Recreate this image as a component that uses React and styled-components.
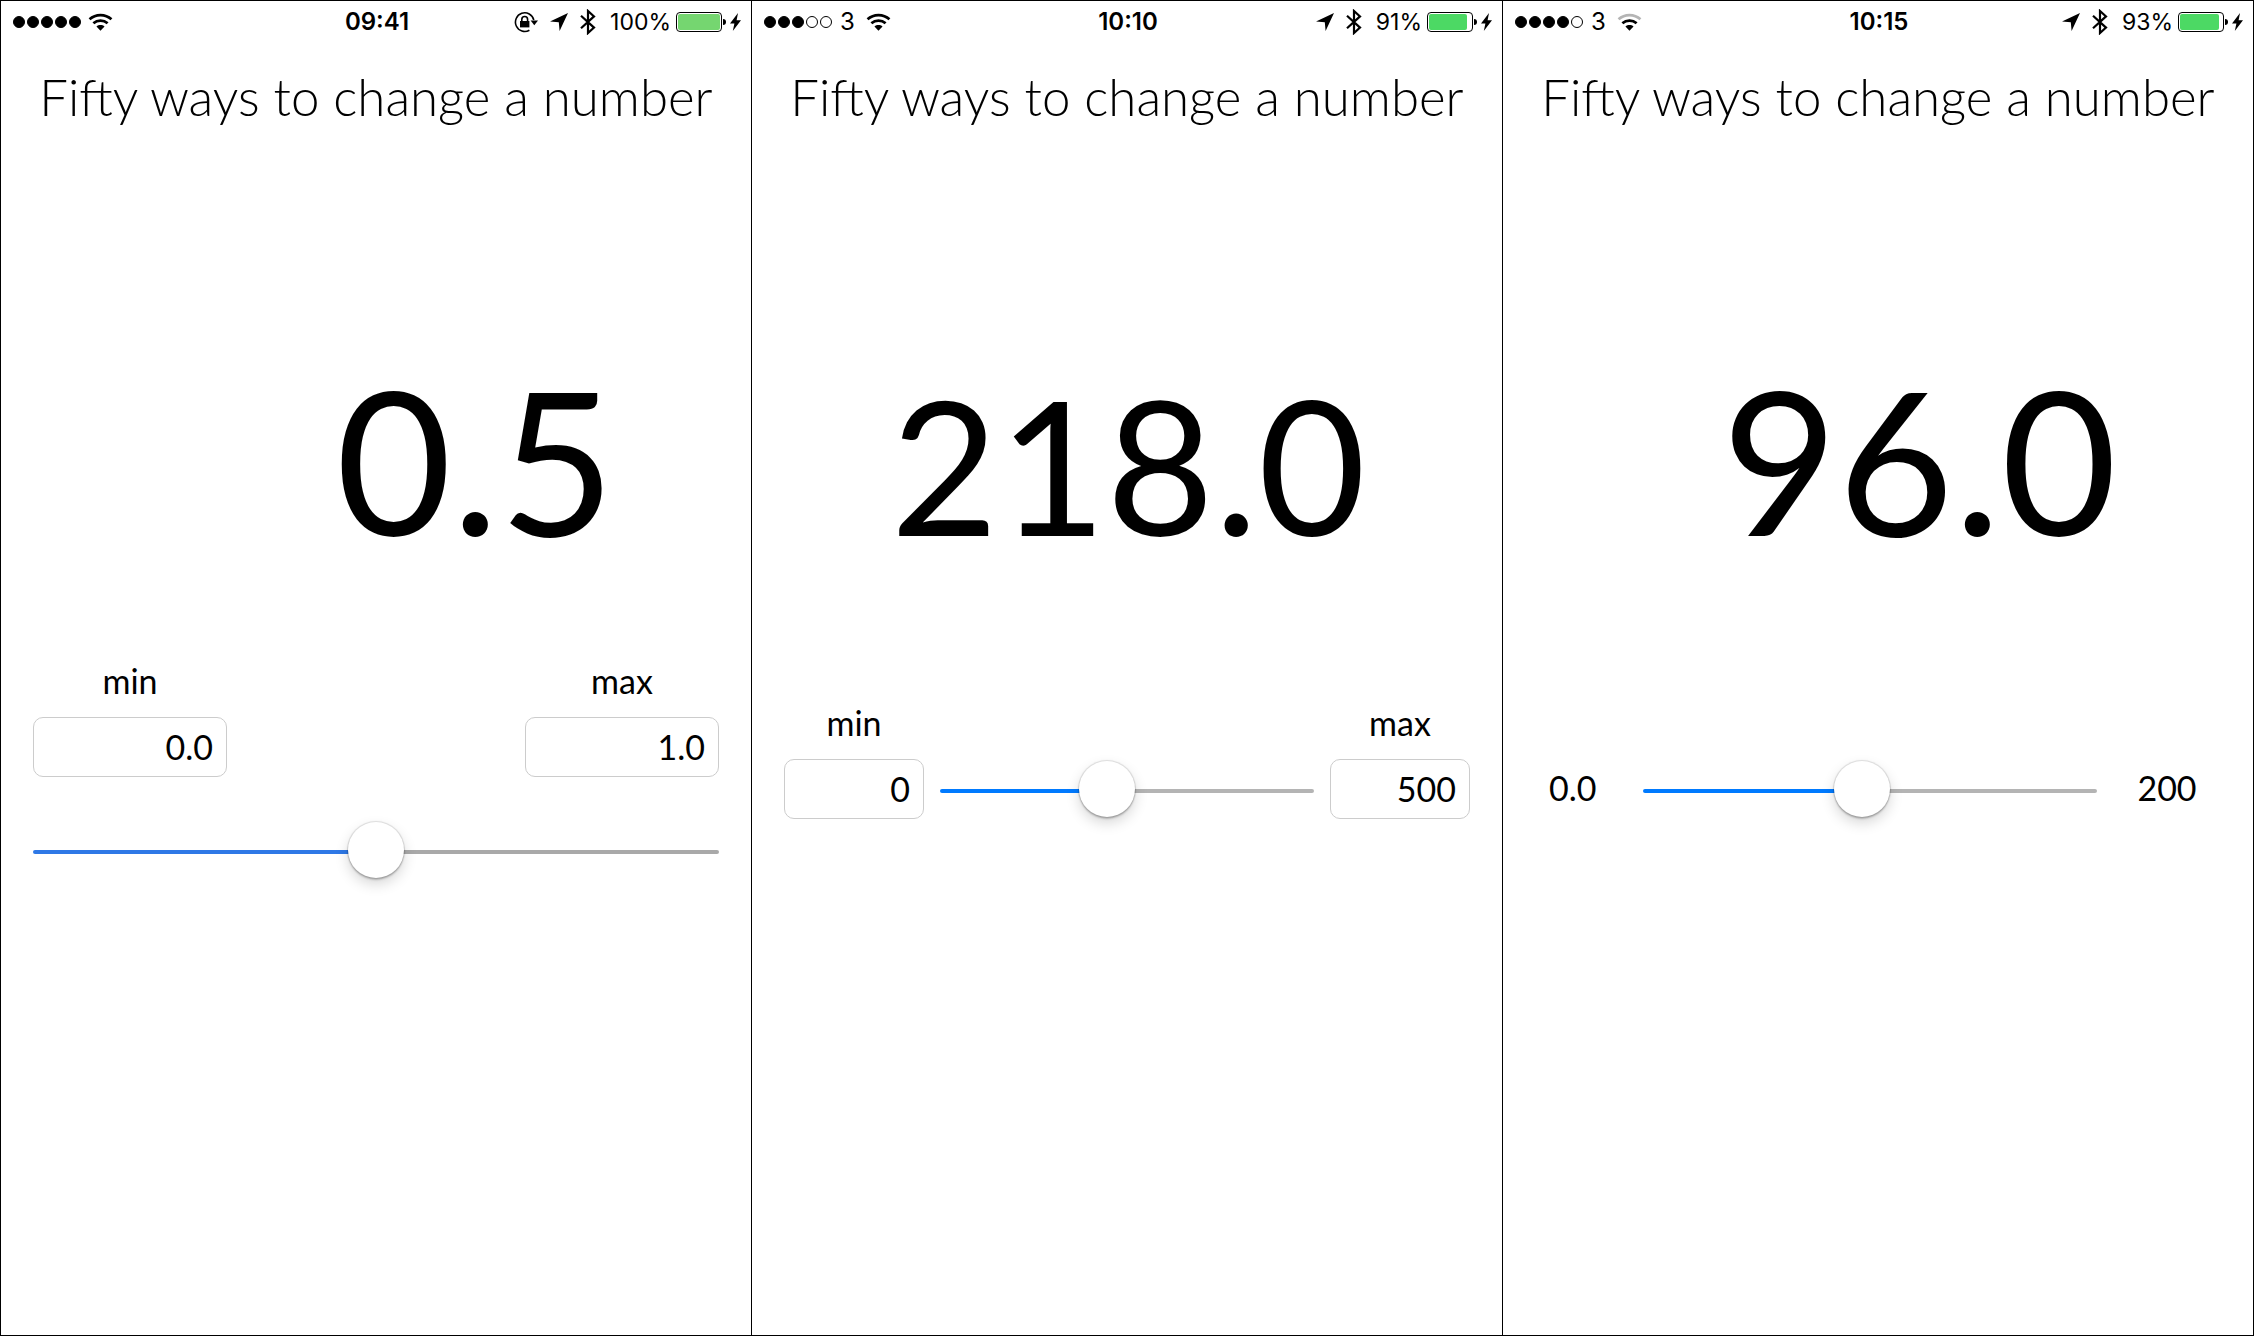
import React, { useState } from 'react'
//styled
import styled, { createGlobalStyle, css } from 'styled-components';

const title = 'Fifty ways to change a number';

const App = () => {
    return (
        <>
        <GlobalStyle />
        <Screens>
            <StackedScreen />
            <InlineScreen />
            <CompactScreen />
        </Screens>
        </>
    )
}

//min and max above a full width slider
const StackedScreen = () => {
    const [value, setValue] = useState(0.5);
    const [min, setMin] = useState('0.0');
    const [max, setMax] = useState('1.0');
    return (
        <Screen>
            <StatusBar signal={5} time="09:41" locked battery={100} muted />
            <Title>{title}</Title>
            <Readout><output>{value.toFixed(1)}</output></Readout>
            <Controls $top={82}>
                <Limits>
                    <Field $width={194}>
                        min
                        <Input value={min} onChange={(e) => setMin(e.target.value)} />
                    </Field>
                    <Field $width={194}>
                        max
                        <Input value={max} onChange={(e) => setMax(e.target.value)} />
                    </Field>
                </Limits>
                <NumberSlider muted min={min} max={max} step={0.1} value={value} onChange={setValue} />
            </Controls>
        </Screen>
    )
}

//slider between the two fields
const InlineScreen = () => {
    const [value, setValue] = useState(218);
    const [min, setMin] = useState('0');
    const [max, setMax] = useState('500');
    return (
        <Screen>
            <StatusBar signal={3} carrier="3" time="10:10" battery={91} />
            <Title>{title}</Title>
            <Readout $small><output>{value.toFixed(1)}</output></Readout>
            <Controls $top={124}>
                <SliderRow>
                    <Field $width={140}>
                        min
                        <Input value={min} onChange={(e) => setMin(e.target.value)} />
                    </Field>
                    <NumberSlider min={min} max={max} step={1} value={value} onChange={setValue} />
                    <Field $width={140}>
                        max
                        <Input value={max} onChange={(e) => setMax(e.target.value)} />
                    </Field>
                </SliderRow>
            </Controls>
        </Screen>
    )
}

//plain numbers either side of the slider
const CompactScreen = () => {
    const [value, setValue] = useState(96);
    return (
        <Screen>
            <StatusBar signal={4} carrier="3" weakWifi time="10:15" battery={93} />
            <Title>{title}</Title>
            <Readout><output>{value.toFixed(1)}</output></Readout>
            <Controls $top={180}>
                <SliderRow>
                    <MinLabel>0.0</MinLabel>
                    <NumberSlider min={0} max={200} step={1} value={value} onChange={setValue} />
                    <MaxLabel>200</MaxLabel>
                </SliderRow>
            </Controls>
        </Screen>
    )
}

const NumberSlider = ({ min, max, step, value, muted, onChange }) => {
    const low = Number(min) || 0;
    const high = Number(max) || 0;
    const ratio = high > low ? (value - low) / (high - low) : 0;
    return (
        <Slider
            type="range"
            aria-label="value"
            min={low}
            max={high}
            step={step}
            value={value}
            $muted={muted}
            style={{ '--ratio': ratio }}
            onChange={(e) => onChange(Number(e.target.value))}
        />
    )
}

const StatusBar = ({ signal, carrier, weakWifi, time, locked, battery, muted }) => {
    return (
        <Status>
            <StatusLeft>
                <Signal>
                    {[1, 2, 3, 4, 5].map((n) => <Dot key={n} $on={n <= signal} />)}
                </Signal>
                {carrier && <Carrier>{carrier}</Carrier>}
                <WifiIcon weak={weakWifi} />
            </StatusLeft>
            <Time>{time}</Time>
            <StatusRight>
                {locked && <LockIcon />}
                <ArrowIcon />
                <BluetoothIcon />
                <Percent>{battery}%</Percent>
                <Battery>
                    <BatteryBody><BatteryLevel $muted={muted} style={{ width: `${battery}%` }} /></BatteryBody>
                    <BatteryTip />
                </Battery>
                <BoltIcon />
            </StatusRight>
        </Status>
    )
}

//icons
const WifiIcon = ({ weak }) => (
    <svg width="25" height="18" viewBox="0 0 26 18" fill="none" stroke="#000" strokeWidth="2.8">
        <path d="M1.6 6.2C8 .4 18 .4 24.4 6.2" stroke={weak ? '#b5b5b5' : '#000'} />
        <path d="M5.6 10.4C9.8 6.6 16.2 6.6 20.4 10.4" />
        <path d="M13 18 8.8 13.7C11.2 11.7 14.8 11.7 17.2 13.7Z" fill="#000" stroke="none" />
    </svg>
)

const LockIcon = () => (
    <svg width="24" height="22" viewBox="0 0 24 22">
        <path d="M15.4 19.2A9.3 9.3 0 1 1 19.8 9" fill="none" stroke="#000" strokeWidth="1.6" />
        <path d="M16.6 9.6H24L20.3 14.2Z" />
        <path d="M6 10h9.4v6.4H6z" />
        <path d="M7.8 10.4V8.4a2.9 2.9 0 0 1 5.8 0v2" fill="none" stroke="#000" strokeWidth="1.6" />
    </svg>
)

const ArrowIcon = () => (
    <svg width="18" height="18" viewBox="0 0 18 18">
        <path d="M18 0 9.6 18 8.8 9.2 0 8.4Z" />
    </svg>
)

const BluetoothIcon = () => (
    <svg width="16" height="26" viewBox="0 0 16 26" fill="none" stroke="#000" strokeWidth="2.2">
        <path d="M1 6.8 14 18.6 8 24V2L14 7.4 1 19.2" />
    </svg>
)

const BoltIcon = () => (
    <svg width="11" height="18" viewBox="0 0 11 18">
        <path d="M8 0 0 10.4H4.4L2.8 18 11 7.2H6.6Z" />
    </svg>
)

//styled components
const GlobalStyle = createGlobalStyle`
* {
    box-sizing: border-box;
}
body {
    margin: 0;
    background: #fff;
    color: #000;
    font-family: Lato, "Liberation Sans", sans-serif;
}
`;

const Screens = styled.main`
display: flex;
min-height: 100vh;
border: 1px solid #000;
border-left: none;
`;

const Screen = styled.section`
flex: 1;
min-width: 0;
border-left: 1px solid #000;
`;

const Status = styled.header`
display: grid;
grid-template-columns: 1fr auto 1fr;
align-items: center;
height: 42px;
padding: 0 10px 0 12px;
font-family: Inter, "Liberation Sans", sans-serif;
font-size: 24px;
line-height: 30px;
svg{
    display: block;
    flex: none;
}
`;

const StatusLeft = styled.div`
display: flex;
align-items: center;
gap: 7px;
`;

const Signal = styled.div`
display: flex;
gap: 2px;
`;

const Dot = styled.span`
width: 12px;
height: 12px;
border: 1px solid #000;
border-radius: 50%;
background: ${(p) => (p.$on ? '#000' : 'none')};
`;

const Carrier = styled.span`
margin: 0 4px 0 1px;
`;

const Time = styled.time`
font-weight: 600;
`;

const StatusRight = styled.div`
display: flex;
align-items: center;
justify-content: flex-end;
gap: 12px;
`;

const Percent = styled.span`
font-size: 23px;
margin: 0 -7px 0 2px;
`;

const Battery = styled.div`
display: flex;
align-items: center;
gap: 1px;
margin-right: -8px;
`;

const BatteryBody = styled.div`
width: 46px;
height: 20px;
padding: 1px;
border: 1px solid #000;
border-radius: 4px;
`;

const BatteryLevel = styled.div`
height: 100%;
border-radius: 2px;
background: ${(p) => (p.$muted ? '#75d670' : '#4cd964')};
`;

const BatteryTip = styled.span`
width: 3px;
height: 6px;
border-radius: 0 3px 3px 0;
background: #000;
`;

const Title = styled.h1`
margin: 22px 0 0;
font-size: 51px;
font-weight: 300;
line-height: 64px;
text-align: center;
white-space: nowrap;
`;

const Readout = styled.div`
margin-top: 210px;
padding-right: 136px;
font-size: 200px;
line-height: 240px;
text-align: right;
output{
    font-size: ${(p) => (p.$small ? '186px' : '200px')};
    line-height: 1;
}
`;

const Controls = styled.div`
display: flex;
flex-direction: column;
gap: 43px;
margin-top: ${(p) => p.$top}px;
padding: 0 32px;
font-size: 34px;
`;

const Limits = styled.div`
display: flex;
justify-content: space-between;
`;

const SliderRow = styled.div`
display: flex;
align-items: flex-end;
gap: 16px;
`;

const Field = styled.label`
display: flex;
flex-direction: column;
gap: 16px;
width: ${(p) => p.$width}px;
line-height: 40px;
text-align: center;
`;

const Input = styled.input`
width: 100%;
height: 60px;
padding: 0 13px 2px;
border: 1px solid #ccc;
border-radius: 10px;
background: #fff;
color: inherit;
font: inherit;
text-align: right;
`;

const limitText = css`
flex: none;
line-height: 58px;
height: 60px;
`;

const MinLabel = styled.span`
${limitText}
width: 92px;
padding-left: 14px;
`;

const MaxLabel = styled.span`
${limitText}
width: 108px;
text-align: center;
`;

const Slider = styled.input`
--fill: calc(28px + (100% - 56px) * var(--ratio));
appearance: none;
flex: 1 0 auto;
min-width: 0;
width: 0;
height: 60px;
margin: 0;
padding-top: 4px;
background: none;
${Controls} > &{
    flex: none;
    width: 100%;
}
&::-webkit-slider-runnable-track{
    height: 4px;
    border-radius: 2px;
    background: linear-gradient(
        to right,
        ${(p) => (p.$muted ? '#2e78e6' : '#007aff')} var(--fill),
        ${(p) => (p.$muted ? '#a9a9a9' : '#b4b4b4')} var(--fill)
    );
}
&::-webkit-slider-thumb{
    appearance: none;
    width: 56px;
    height: 56px;
    margin-top: -28px;
    border-radius: 50%;
    background: #fff;
    box-shadow: 0 0 1px 1px rgba(0, 0, 0, 0.12), 0 2px 2px rgba(0, 0, 0, 0.2), 0 6px 14px rgba(0, 0, 0, 0.16);
}
`;

export default App
